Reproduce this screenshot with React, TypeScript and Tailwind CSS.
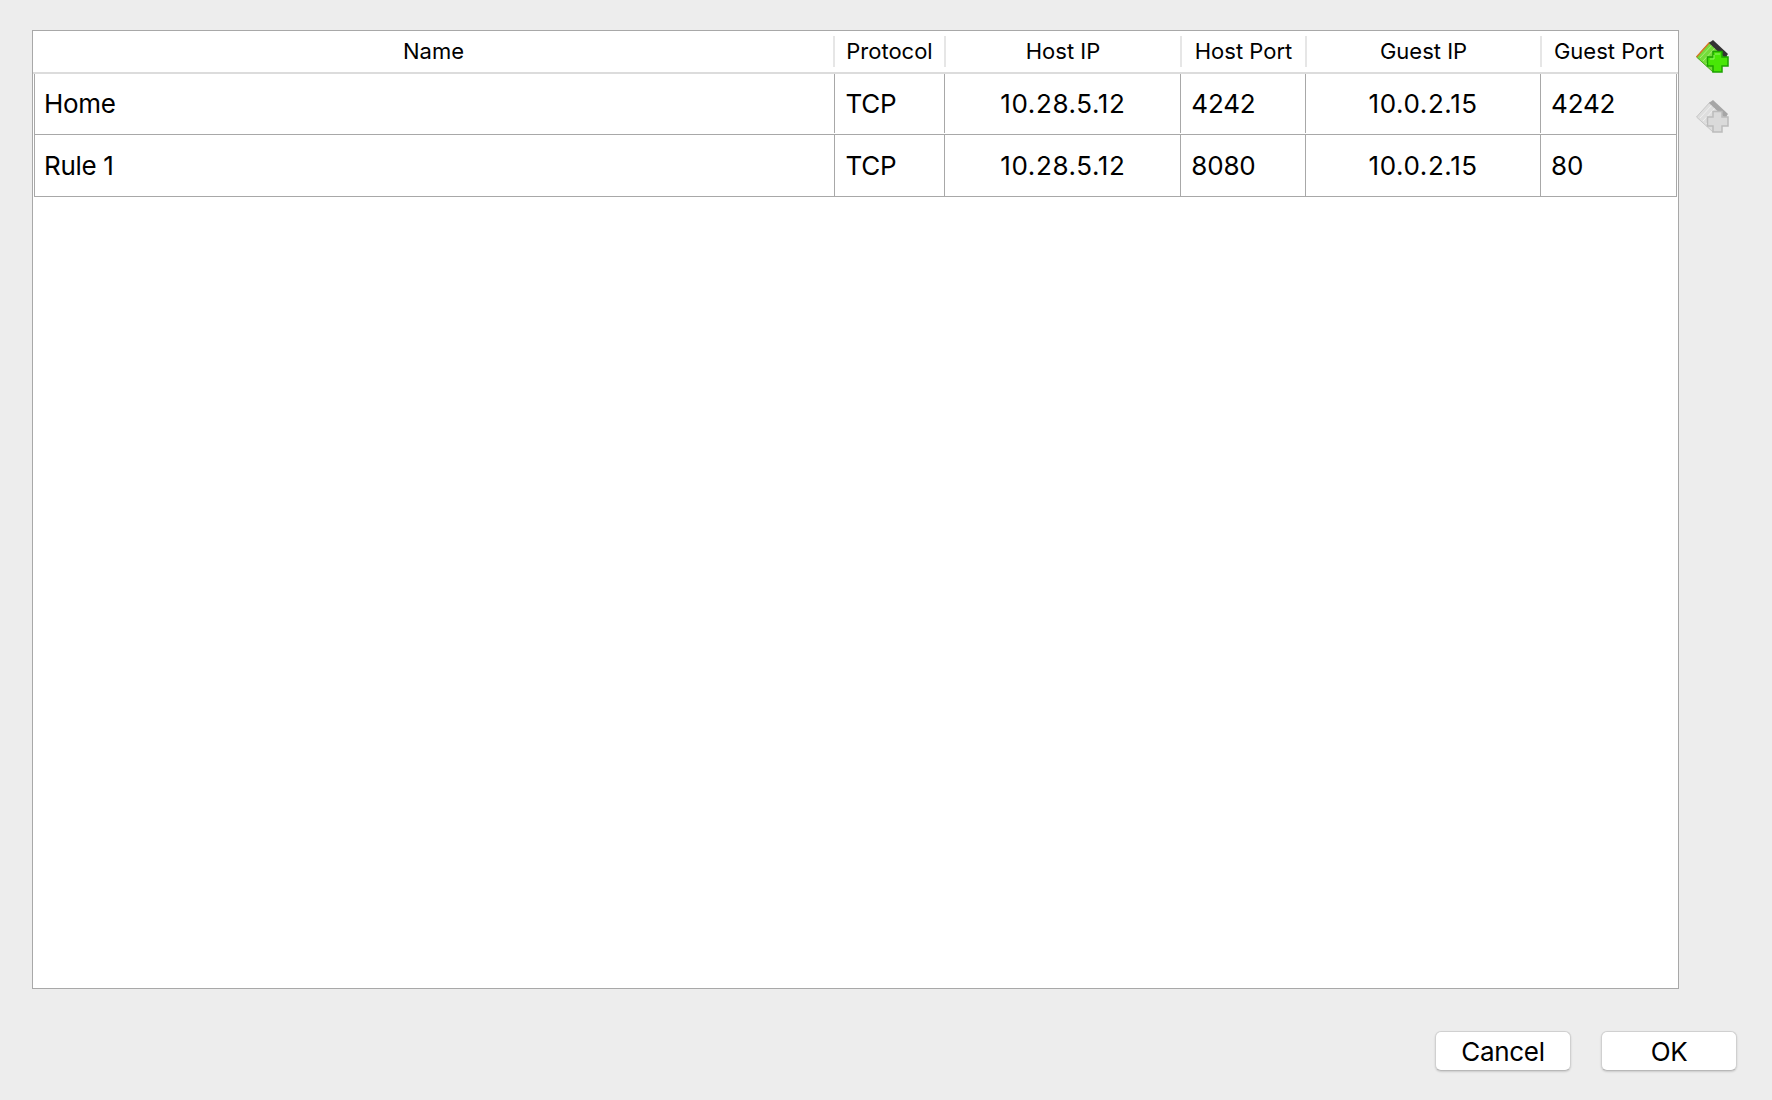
const columns = [
  { label: "Name", width: "w-[799px]", centered: false },
  { label: "Protocol", width: "w-[111px]", centered: false },
  { label: "Host IP", width: "w-[236px]", centered: true },
  { label: "Host Port", width: "w-[125px]", centered: false },
  { label: "Guest IP", width: "w-[235px]", centered: true },
  { label: "Guest Port", width: "w-[136px]", centered: false },
];

const rules = [
  ["Home", "TCP", "10.28.5.12", "4242", "10.0.2.15", "4242"],
  ["Rule 1", "TCP", "10.28.5.12", "8080", "10.0.2.15", "80"],
];

const plusPath = "M17 11.5 H26 V17 H32 V26 H26 V32 H17 V26 H11.5 V17 H17 Z";

function AddIcon() {
  return (
    <svg width="33" height="33" viewBox="0 0 33 33">
      <path d="M0.5 17 L14 2 L31 16 L17 32 Z" fill="#74dc3a" stroke="#4aa81e" strokeWidth="1" />
      <path d="M0.5 17 L13.5 2.5" stroke="#d8762a" strokeWidth="1.5" />
      <path d="M4 18 L16 5 M7 21 L19 8 M10 24 L22 11 M13 27 L25 14" stroke="#a6ee74" strokeWidth="1" />
      <path d="M13 3 L17 0 L32 14 L29 18 Z" fill="#333333" />
      <path d={plusPath} fill="#48e606" stroke="#1da300" strokeWidth="1.5" />
      <path d="M19 14 H24 M14 19 H18 V15" fill="none" stroke="#8ef464" strokeWidth="1" />
    </svg>
  );
}

function RemoveIcon() {
  return (
    <svg width="33" height="33" viewBox="0 0 33 33">
      <path d="M0.5 17 L14 2 L31 16 L17 32 Z" fill="#dedede" stroke="#c6c6c6" strokeWidth="1" />
      <path d="M4 18 L16 5 M7 21 L19 8 M10 24 L22 11" stroke="#f0f0f0" strokeWidth="1" />
      <path d="M13 3 L17 0 L32 14 L29 18 Z" fill="#a6a6a6" />
      <path d={plusPath} fill="#dadada" stroke="#bcbcbc" strokeWidth="1.5" />
    </svg>
  );
}

export default function App() {
  return (
    <div className="w-[1772px] h-[1100px] bg-[#ededed] pt-[30px] font-['Inter','Liberation_Sans',sans-serif] text-black overflow-hidden">
      <div className="flex">
        <div className="ml-[32px] w-[1647px] h-[959px] bg-white border border-[#a8a8a8] shrink-0">
          <div className="flex h-[43px] border-b-2 border-[#dcdcdc] pl-[1px]">
            {columns.map((col, i) => (
              <div
                key={col.label}
                className={`${col.width} flex items-center justify-center text-[22px] ${i > 0 ? "border-l-2 border-[#e6e6e6] my-[5px]" : ""}`}
              >
                {col.label}
              </div>
            ))}
          </div>
          <div className="ml-[1px] w-[1643px] border-l border-r border-[#a8a8a8]">
            {rules.map((row) => (
              <div key={row[0] + row[3]} className="flex h-[62px] first:h-[61px] first:pb-[1px] border-b border-[#a8a8a8]">
                {row.map((cell, i) => (
                  <div
                    key={i}
                    className={`${columns[i].width} flex items-center text-[26px] ${i > 0 ? "border-l border-[#a8a8a8]" : ""} ${columns[i].centered ? "justify-center tracking-[0.6px]" : i === 0 ? "pl-[9px] tracking-[-0.3px]" : i === 1 ? "pl-[11px] tracking-[-0.2px]" : "pl-[10px] tracking-[-0.2px]"}`}
                  >
                    {cell}
                  </div>
                ))}
              </div>
            ))}
          </div>
        </div>
        <div className="ml-[17px] pt-[10px] flex flex-col gap-[27px]">
          <AddIcon />
          <RemoveIcon />
        </div>
      </div>
      <div className="flex justify-end gap-[30px] mt-[42px] pr-[35px]">
        <button className="w-[136px] h-[40px] pb-[2px] bg-white rounded-[6px] border border-[#d0d0d0] border-b-[#b8b8b8] shadow-[0_1px_2px_rgba(0,0,0,0.15)] text-[26px] tracking-[-0.3px]">
          Cancel
        </button>
        <button className="w-[136px] h-[40px] pb-[2px] bg-white rounded-[6px] border border-[#d0d0d0] border-b-[#b8b8b8] shadow-[0_1px_2px_rgba(0,0,0,0.15)] text-[26px] tracking-[-0.3px]">
          OK
        </button>
      </div>
    </div>
  );
}
